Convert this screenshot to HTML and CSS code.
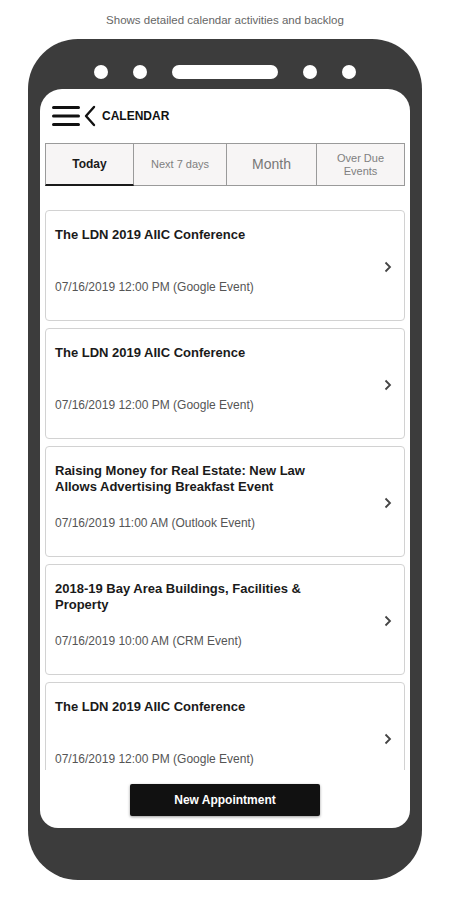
FILE: index.html
```html
<!DOCTYPE html>
<html lang="en">
<head>
  <meta charset="UTF-8" />
  <meta name="viewport" content="width=device-width, initial-scale=1.0" />
  <title>Calendar</title>
  <link rel="stylesheet" href="styles.css">
</head>
<body>
  <p class="caption">Shows detailed calendar activities and backlog</p>

  <div class="phone">
    <div class="phone-top">
      <span class="dot"></span>
      <span class="dot"></span>
      <span class="speaker"></span>
      <span class="dot"></span>
      <span class="dot"></span>
    </div>

    <div class="screen">
      <header class="app-bar">
        <svg class="menu-icon" width="28" height="22" viewBox="0 0 28 22">
          <path d="M1.5 2.5H26.5M1.5 11H26.5M1.5 19.5H26.5" stroke="#111" stroke-width="3" stroke-linecap="round" fill="none"/>
        </svg>
        <svg class="back-icon" width="12" height="22" viewBox="0 0 12 22">
          <path d="M10 2L2 11L10 20" stroke="#111" stroke-width="2.4" stroke-linecap="round" stroke-linejoin="round" fill="none"/>
        </svg>
        <span class="app-title">CALENDAR</span>
      </header>

      <nav class="tabs">
        <button class="tab active">Today</button>
        <button class="tab small">Next 7 days</button>
        <button class="tab large">Month</button>
        <button class="tab small">Over Due<br>Events</button>
      </nav>

      <div class="events">
        <div class="event">
          <div class="event-info">
            <div class="event-title">The LDN 2019 AIIC Conference</div>
            <div class="event-date">07/16/2019 12:00 PM (Google Event)</div>
          </div>
          <svg class="chevron" width="8" height="12" viewBox="0 0 8 12"><path d="M1.5 1.5L6 6L1.5 10.5" stroke="#444" stroke-width="1.8" fill="none"/></svg>
        </div>
        <div class="event">
          <div class="event-info">
            <div class="event-title">The LDN 2019 AIIC Conference</div>
            <div class="event-date">07/16/2019 12:00 PM (Google Event)</div>
          </div>
          <svg class="chevron" width="8" height="12" viewBox="0 0 8 12"><path d="M1.5 1.5L6 6L1.5 10.5" stroke="#444" stroke-width="1.8" fill="none"/></svg>
        </div>
        <div class="event">
          <div class="event-info">
            <div class="event-title">Raising Money for Real Estate: New Law Allows Advertising Breakfast Event</div>
            <div class="event-date">07/16/2019 11:00 AM (Outlook Event)</div>
          </div>
          <svg class="chevron" width="8" height="12" viewBox="0 0 8 12"><path d="M1.5 1.5L6 6L1.5 10.5" stroke="#444" stroke-width="1.8" fill="none"/></svg>
        </div>
        <div class="event">
          <div class="event-info">
            <div class="event-title">2018-19 Bay Area Buildings, Facilities &amp; Property</div>
            <div class="event-date">07/16/2019 10:00 AM (CRM Event)</div>
          </div>
          <svg class="chevron" width="8" height="12" viewBox="0 0 8 12"><path d="M1.5 1.5L6 6L1.5 10.5" stroke="#444" stroke-width="1.8" fill="none"/></svg>
        </div>
        <div class="event">
          <div class="event-info">
            <div class="event-title">The LDN 2019 AIIC Conference</div>
            <div class="event-date">07/16/2019 12:00 PM (Google Event)</div>
          </div>
          <svg class="chevron" width="8" height="12" viewBox="0 0 8 12"><path d="M1.5 1.5L6 6L1.5 10.5" stroke="#444" stroke-width="1.8" fill="none"/></svg>
        </div>
      </div>

      <div class="actions">
        <button class="new-btn">New Appointment</button>
      </div>
    </div>
  </div>
</body>
</html>
```

FILE: styles.css
```css
body {
  background-color: #fff;
  color: #111;
  font-family: "Liberation Sans", Arial, sans-serif;
  margin: 0;
}

.caption {
  margin: 14px 0 12px;
  font-size: 11.5px;
  line-height: 13px;
  color: #666;
  text-align: center;
}

.phone {
  width: 394px;
  height: 841px;
  margin: 0 auto;
  box-sizing: border-box;
  padding: 0 12px;
  background: #3c3c3c;
  border-radius: 50px;
  display: flex;
  flex-direction: column;
}

.phone-top {
  height: 50px;
  box-sizing: border-box;
  padding-top: 26px;
  display: flex;
  justify-content: center;
  align-items: flex-start;
  gap: 25px;
}

.dot {
  width: 14px;
  height: 14px;
  border-radius: 50%;
  background: #fff;
}

.speaker {
  width: 106px;
  height: 14px;
  border-radius: 7px;
  background: #fff;
}

.screen {
  height: 739px;
  background: #fff;
  border-radius: 22px 22px 18px 18px;
  display: flex;
  flex-direction: column;
  overflow: hidden;
}

.app-bar {
  height: 54px;
  flex: none;
  display: flex;
  align-items: center;
  padding-left: 12px;
}

.back-icon {
  margin-left: 4px;
}

.app-title {
  margin-left: 6px;
  font-size: 12px;
  font-weight: bold;
  color: #111;
}

.tabs {
  flex: none;
  margin: 0 5px;
  height: 43px;
  display: grid;
  grid-template-columns: 89px 93px 90px 1fr;
}

.tab {
  font-family: inherit;
  background: #f7f5f5;
  border: 1px solid #9a9a9a;
  border-left: none;
  color: #808080;
  font-size: 11px;
  line-height: 13px;
  padding: 0;
  cursor: pointer;
}

.tab:first-child {
  border-left: 1px solid #9a9a9a;
}

.tab.active {
  color: #1a1a1a;
  font-weight: bold;
  font-size: 12px;
  border-bottom: 2px solid #1a1a1a;
}

.tab.large {
  font-size: 14px;
  color: #777;
}

.events {
  flex: 1;
  min-height: 0;
  overflow: hidden;
  padding: 24px 5px 0;
  display: flex;
  flex-direction: column;
  gap: 7px;
}

.event {
  flex: none;
  height: 111px;
  box-sizing: border-box;
  border: 1px solid #d2d2d2;
  border-radius: 4px;
  padding: 16px 12px 0 9px;
  display: flex;
  align-items: flex-start;
  justify-content: space-between;
}

.event-info {
  display: flex;
  flex-direction: column;
}

.event-title {
  max-width: 262px;
  min-height: 32px;
  font-size: 13px;
  line-height: 16px;
  font-weight: bold;
  color: #1a1a1a;
}

.event-date {
  margin-top: 20px;
  font-size: 12px;
  line-height: 16px;
  color: #555;
}

.chevron {
  align-self: center;
  margin-top: -14px;
}

.actions {
  height: 58px;
  flex: none;
  display: flex;
  justify-content: center;
  padding-top: 14px;
  box-sizing: border-box;
}

.new-btn {
  width: 190px;
  height: 32px;
  background: #111;
  color: #fff;
  border: none;
  border-radius: 2px;
  font-family: inherit;
  font-size: 12px;
  font-weight: bold;
  box-shadow: 0 1px 3px rgba(0, 0, 0, 0.4);
  cursor: pointer;
}
```
